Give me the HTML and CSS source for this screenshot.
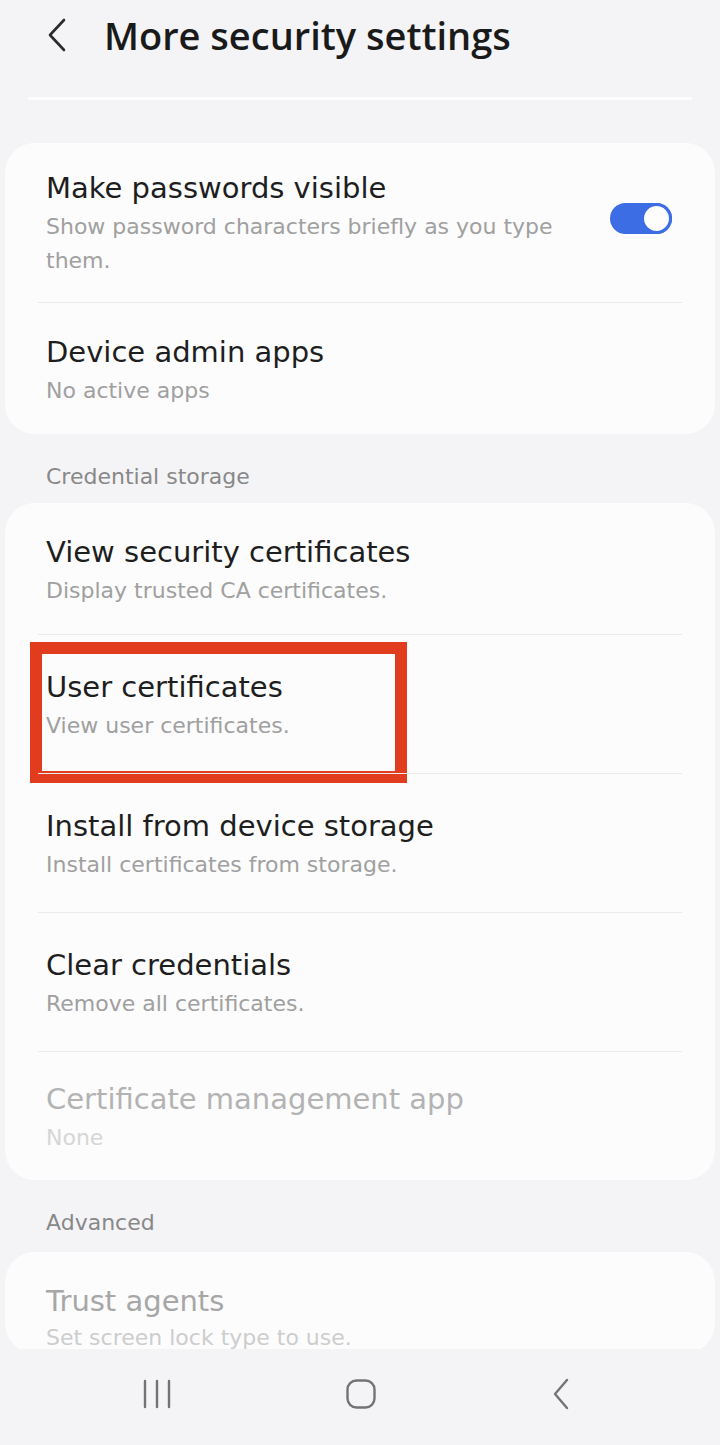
FILE: index.html
```html
<!doctype html>
<html lang="en">
    <head>
        <meta charset="UTF-8" />
        <meta name="viewport" content="width=device-width, initial-scale=1.0" />
        <title>More security settings</title>
        <link rel="stylesheet" href="styles.css">
    </head>
    <body>
        <div class="screen">
            <!-- Header -->
            <header class="header">
                <button class="back-btn" aria-label="Back">
                    <svg width="22" height="34" viewBox="0 0 22 34">
                        <path d="M18 2 L4 17 L18 32" fill="none" stroke="#2b2b2b" stroke-width="2.6" stroke-linecap="round" stroke-linejoin="round"/>
                    </svg>
                </button>
                <h1 class="title">More security settings</h1>
            </header>

            <main class="content">
                <div class="top-line"></div>

                <section class="card card-first">
                    <div class="item item-top item-toggle">
                        <div class="item-text">
                            <div class="item-title">Make passwords visible</div>
                            <div class="item-sub">Show password characters briefly as you type them.</div>
                        </div>
                        <div class="switch on"><span class="knob"></span></div>
                    </div>
                    <div class="item item-admin">
                        <div class="item-title">Device admin apps</div>
                        <div class="item-sub">No active apps</div>
                    </div>
                </section>

                <h2 class="section-label">Credential storage</h2>

                <section class="card">
                    <div class="item item-top item-first">
                        <div class="item-title">View security certificates</div>
                        <div class="item-sub">Display trusted CA certificates.</div>
                    </div>
                    <div class="item item-marked">
                        <div class="item-title">User certificates</div>
                        <div class="item-sub">View user certificates.</div>
                        <div class="highlight"></div>
                    </div>
                    <div class="item">
                        <div class="item-title">Install from device storage</div>
                        <div class="item-sub">Install certificates from storage.</div>
                    </div>
                    <div class="item">
                        <div class="item-title">Clear credentials</div>
                        <div class="item-sub">Remove all certificates.</div>
                    </div>
                    <div class="item item-last disabled">
                        <div class="item-title">Certificate management app</div>
                        <div class="item-sub">None</div>
                    </div>
                </section>

                <h2 class="section-label section-advanced">Advanced</h2>

                <section class="card card-peek">
                    <div class="item item-top item-first disabled-soft">
                        <div class="item-title">Trust agents</div>
                        <div class="item-sub">Set screen lock type to use.</div>
                    </div>
                </section>
            </main>

            <!-- Navigation bar -->
            <nav class="navbar">
                <svg width="34" height="32" viewBox="0 0 34 32">
                    <path d="M5 3 V29 M17 3 V29 M29 3 V29" stroke="#737373" stroke-width="2.4" stroke-linecap="round"/>
                </svg>
                <svg width="32" height="32" viewBox="0 0 32 32">
                    <rect x="2.5" y="2.5" width="27" height="27" rx="9" fill="none" stroke="#737373" stroke-width="2.4"/>
                </svg>
                <svg width="24" height="34" viewBox="0 0 24 34">
                    <path d="M19 3 L7 17 L19 31" fill="none" stroke="#737373" stroke-width="2.4" stroke-linecap="round" stroke-linejoin="round"/>
                </svg>
            </nav>
        </div>
    </body>
</html>
```

FILE: styles.css
```css
body {
    margin: 0;
    padding: 0;
    background: #f4f4f6;
    font-family: "DejaVu Sans", "Noto Sans", sans-serif;
    color: #1f1f1f;
}
.screen {
    width: 720px;
    height: 1445px;
    display: flex;
    flex-direction: column;
    overflow: hidden;
}
.header {
    height: 70px;
    display: flex;
    align-items: center;
    padding-left: 46px;
    flex-shrink: 0;
}
.back-btn {
    border: none;
    background: none;
    padding: 0;
    margin-right: 36px;
    display: flex;
    align-items: center;
}
.title {
    margin: 0;
    font-family: "Open Sans", "Noto Sans", sans-serif;
    font-size: 38px;
    font-weight: 600;
    color: #1a1a1a;
}
.content {
    flex: 1;
    overflow: hidden;
}
.top-line {
    height: 3px;
    margin: 27px 28px 0;
    background: #fdfdfe;
}
.card {
    background: #fcfcfd;
    margin: 0 5px;
    border-radius: 30px;
}
.card-first {
    margin-top: 43px;
}
.card-peek {
    height: 101px;
    overflow: hidden;
}
.card-peek .item-sub {
    margin-top: 5px;
    line-height: 28px;
}
.item {
    position: relative;
    margin: 0 33px;
    padding: 34px 8px 30px;
    border-top: 1px solid #ebebee;
}
.item-top {
    border-top: none;
}
.item-first {
    padding-top: 31px;
    padding-bottom: 26px;
}
.item-last {
    padding-top: 29px;
    padding-bottom: 25px;
}
.item-toggle {
    display: flex;
    align-items: center;
    padding-top: 27px;
    padding-bottom: 24px;
}
.item-admin {
    padding-top: 31px;
    padding-bottom: 26px;
}
.item-text {
    flex: 1;
    padding-right: 36px;
}
.item-title {
    font-size: 29px;
    line-height: 36px;
    color: #1e1e1e;
}
.item-sub {
    margin-top: 4px;
    font-size: 22px;
    line-height: 34px;
    color: #a0a0a0;
}
.disabled .item-title {
    color: #b3b3b3;
}
.disabled .item-sub {
    color: #d6d6d6;
}
.disabled-soft .item-title {
    color: #a7a7a7;
}
.disabled-soft .item-sub {
    color: #cdcdcd;
}
.switch {
    width: 62px;
    height: 31px;
    border-radius: 16px;
    background: #3c6de4;
    margin: 0 2px 12px 0;
    position: relative;
    flex-shrink: 0;
}
.switch .knob {
    position: absolute;
    top: 0;
    right: 0;
    width: 25px;
    height: 25px;
    border-radius: 50%;
    border: 3px solid #3c6de4;
    background: #fdfdfd;
}
.section-label {
    margin: 28px 0 11px 46px;
    font-size: 22px;
    line-height: 30px;
    font-weight: normal;
    color: #888888;
}
.section-advanced {
    margin-bottom: 14px;
}
.highlight {
    position: absolute;
    top: 7px;
    left: -8px;
    width: 353px;
    height: 117px;
    border: 12px solid #e23c1f;
}
.navbar {
    height: 90px;
    flex-shrink: 0;
    display: flex;
    align-items: center;
    justify-content: space-between;
    padding: 0 148px 6px 140px;
    background: #f4f4f6;
}
```
